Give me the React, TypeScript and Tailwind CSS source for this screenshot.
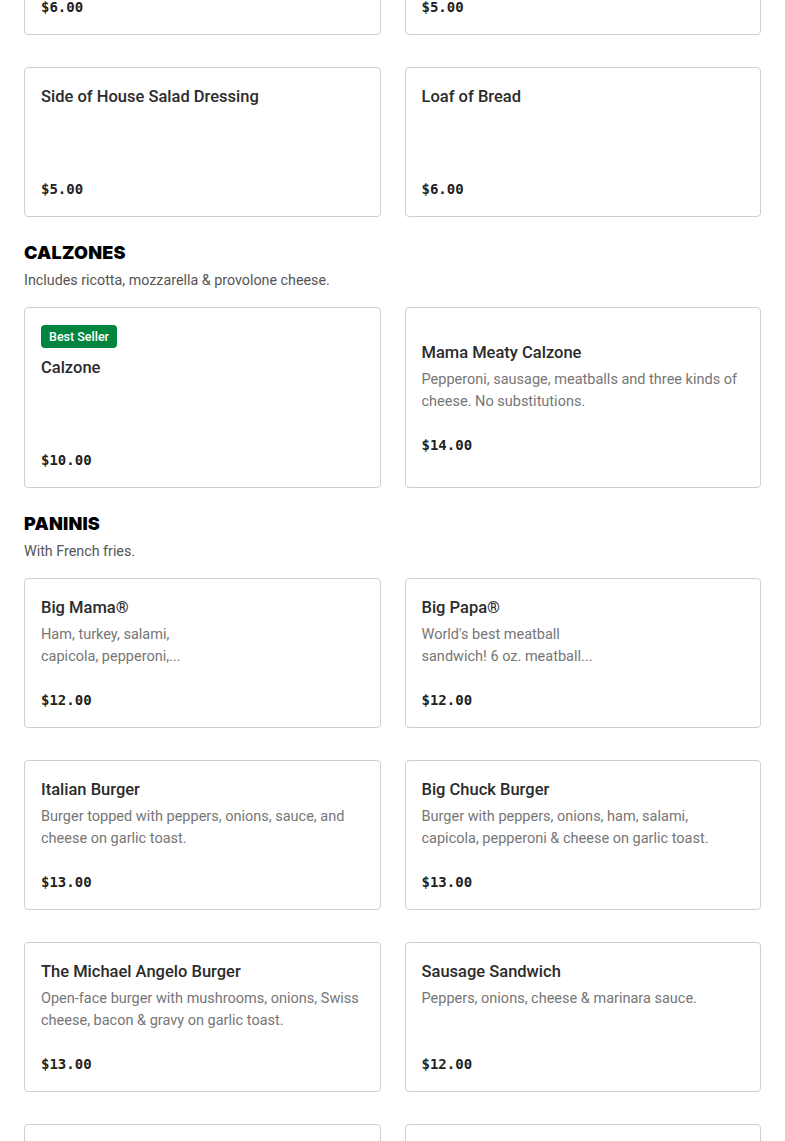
import React from 'react';

interface Item {
  name: string;
  price: string;
  description?: string;
  narrow?: boolean;
  badge?: string;
}

interface Section {
  title?: string;
  subtitle?: string;
  items: Item[];
}

const sections: Section[] = [
  {
    items: [
      { name: 'Side of Meatballs', price: '$6.00' },
      { name: 'Side of Marinara', price: '$5.00' },
      { name: 'Side of House Salad Dressing', price: '$5.00' },
      { name: 'Loaf of Bread', price: '$6.00' },
    ],
  },
  {
    title: 'CALZONES',
    subtitle: 'Includes ricotta, mozzarella & provolone cheese.',
    items: [
      { name: 'Calzone', price: '$10.00', badge: 'Best Seller' },
      {
        name: 'Mama Meaty Calzone',
        price: '$14.00',
        description: 'Pepperoni, sausage, meatballs and three kinds of cheese. No substitutions.',
      },
    ],
  },
  {
    title: 'PANINIS',
    subtitle: 'With French fries.',
    items: [
      {
        name: 'Big Mama®',
        price: '$12.00',
        description: 'Ham, turkey, salami, capicola, pepperoni,...',
        narrow: true,
      },
      {
        name: 'Big Papa®',
        price: '$12.00',
        description: "World's best meatball sandwich! 6 oz. meatball...",
        narrow: true,
      },
      {
        name: 'Italian Burger',
        price: '$13.00',
        description: 'Burger topped with peppers, onions, sauce, and cheese on garlic toast.',
      },
      {
        name: 'Big Chuck Burger',
        price: '$13.00',
        description: 'Burger with peppers, onions, ham, salami, capicola, pepperoni & cheese on garlic toast.',
      },
      {
        name: 'The Michael Angelo Burger',
        price: '$13.00',
        description: 'Open-face burger with mushrooms, onions, Swiss cheese, bacon & gravy on garlic toast.',
      },
      {
        name: 'Sausage Sandwich',
        price: '$12.00',
        description: 'Peppers, onions, cheese & marinara sauce.',
      },
      {
        name: 'Meatball Sandwich',
        price: '$12.00',
        description: 'Meatballs, marinara sauce and melted provolone.',
      },
      {
        name: 'Chicken Parmesan Sandwich',
        price: '$13.00',
        description: 'Breaded chicken, marinara sauce and mozzarella.',
      },
    ],
  },
];

const MenuCard = ({ item }: { item: Item }) => (
  <div className="flex min-h-[150px] flex-col justify-center rounded-[4px] border border-[#cfcfcf] bg-white px-4 pb-[15px] pt-[17px]">
    {item.badge && (
      <span className="mb-2 self-start rounded-[4px] bg-[#00843e] px-2 text-[12.5px] font-medium leading-[23px] text-white">
        {item.badge}
      </span>
    )}
    <h3 className="text-[16.5px] font-medium leading-6 text-[#2b2b2b]">{item.name}</h3>
    <p
      className={`mt-1 min-h-[44px] text-[14.5px] leading-[22px] text-[#767676] line-clamp-2 ${
        item.narrow ? 'max-w-[185px]' : ''
      }`}
    >
      {item.description}
    </p>
    <div className="mt-5 font-['DejaVu_Sans_Mono',monospace] text-[14px] font-bold leading-6 text-[#222]">
      {item.price}
    </div>
  </div>
);

export default function App() {
  return (
    <div className="min-h-screen overflow-hidden bg-white font-['Roboto',sans-serif]">
      <div className="mt-[-115px] px-6 pb-10">
        {sections.map((section, i) => (
          <section key={i} className={i > 0 ? 'mt-6' : ''}>
            {section.title && (
              <>
                <h2 className="font-['Inter',sans-serif] text-[18px] font-black leading-6 tracking-[0.2px] text-black">
                  {section.title}
                </h2>
                <p className="mt-1 text-[14.3px] leading-[22px] text-[#555]">{section.subtitle}</p>
              </>
            )}
            <div className={`grid grid-cols-2 gap-x-6 gap-y-8 ${section.title ? 'mt-4' : ''}`}>
              {section.items.map((item) => (
                <MenuCard key={item.name} item={item} />
              ))}
            </div>
          </section>
        ))}
      </div>
    </div>
  );
}
